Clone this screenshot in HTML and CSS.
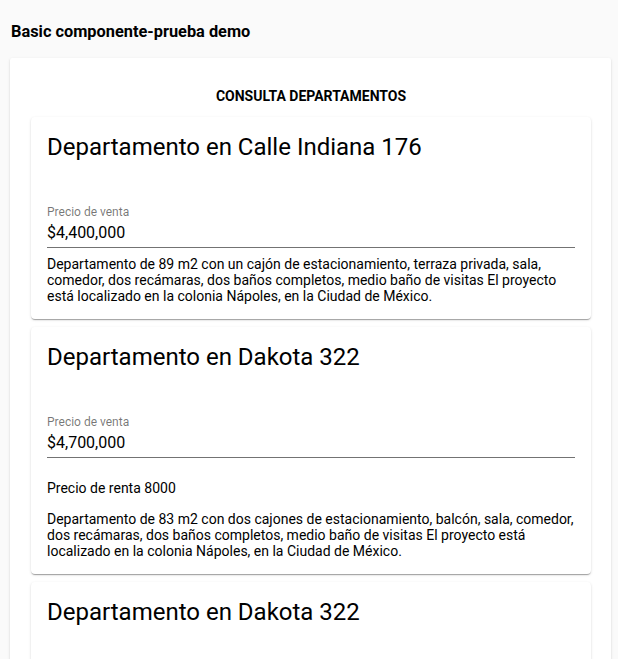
FILE: index.html
```html
<!DOCTYPE html>
<html lang="es">
<head>
<meta charset="utf-8">
<title>Basic componente-prueba demo</title>
<link rel="stylesheet" href="styles.css">
</head>
<body>
<h1 class="page-title">Basic componente-prueba demo</h1>
<div class="outer-card">
  <h2 class="section-title">CONSULTA DEPARTAMENTOS</h2>
  <div class="card-list">
    <div class="card">
      <div class="card-title">Departamento en Calle Indiana 176</div>
      <div class="field">
        <div class="field-label">Precio de venta</div>
        <div class="field-value">$4,400,000</div>
      </div>
      <p class="desc">Departamento de 89 m2 con un cajón de estacionamiento, terraza privada, sala, comedor, dos recámaras, dos baños completos, medio baño de visitas El proyecto está localizado en la colonia Nápoles, en la Ciudad de México.</p>
    </div>
    <div class="card">
      <div class="card-title">Departamento en Dakota 322</div>
      <div class="field">
        <div class="field-label">Precio de venta</div>
        <div class="field-value">$4,700,000</div>
      </div>
      <p class="renta">Precio de renta 8000</p>
      <p class="desc">Departamento de 83 m2 con dos cajones de estacionamiento, balcón, sala, comedor, dos recámaras, dos baños completos, medio baño de visitas El proyecto está localizado en la colonia Nápoles, en la Ciudad de México.</p>
    </div>
    <div class="card">
      <div class="card-title">Departamento en Dakota 322</div>
      <div class="field">
        <div class="field-label">Precio de venta</div>
        <div class="field-value">$4,700,000</div>
      </div>
      <p class="desc">Departamento de 83 m2 con dos cajones de estacionamiento, balcón, sala, comedor, dos recámaras, dos baños completos, medio baño de visitas El proyecto está localizado en la colonia Nápoles, en la Ciudad de México.</p>
    </div>
  </div>
</div>
</body>
</html>
```
FILE: styles.css
```css
html, body {
  margin: 0;
  padding: 0;
  background: #fafafa;
  font-family: Roboto, "Liberation Sans", Arial, sans-serif;
  color: rgba(0, 0, 0, 0.87);
}
.page-title {
  margin: 0;
  padding: 22px 0 0 11px;
  font-size: 16.35px;
  line-height: 20px;
  font-weight: 700;
  color: #000;
}
.outer-card {
  margin: 16px 0 0 10px;
  width: 601px;
  box-sizing: border-box;
  background: #fff;
  padding: 30px 20px 16px 21px;
  box-shadow: 0 2px 1px -1px rgba(0,0,0,.2), 0 1px 1px 0 rgba(0,0,0,.14), 0 1px 3px 0 rgba(0,0,0,.12);
  border-radius: 2px;
}
.section-title {
  margin: 0 0 13px;
  text-align: center;
  font-size: 14px;
  line-height: 16px;
  font-weight: 700;
  color: #000;
}
.card-list {
  display: flex;
  flex-direction: column;
  gap: 8px;
}
.card {
  background: #fff;
  padding: 16px 16px 15px;
  border-radius: 4px;
  box-shadow: 0 2px 1px -1px rgba(0,0,0,.2), 0 1px 1px 0 rgba(0,0,0,.14), 0 1px 3px 0 rgba(0,0,0,.12);
}
.card-title {
  font-size: 24px;
  line-height: 28px;
  font-weight: 400;
  color: #000;
}
.field {
  margin-top: 44px;
  border-bottom: 1px solid rgba(0, 0, 0, 0.55);
  padding-bottom: 4px;
}
.field-label {
  font-size: 12px;
  line-height: 14px;
  color: rgba(0, 0, 0, 0.54);
}
.field-value {
  margin-top: 4px;
  font-size: 16px;
  line-height: 20px;
  color: #000;
}
.desc, .renta {
  margin: 8px 0 0;
  font-size: 14px;
  line-height: 16px;
  color: #000;
}
.renta {
  margin: 22px 0 0;
}
.renta + .desc {
  margin-top: 15px;
}
```
